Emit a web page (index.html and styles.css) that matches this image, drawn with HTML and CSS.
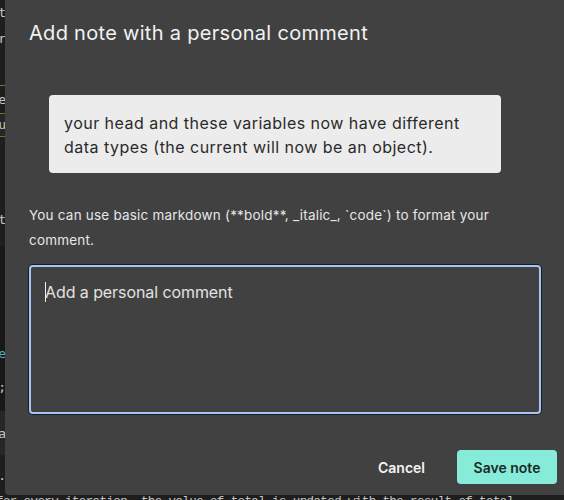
FILE: index.html
```html
<!DOCTYPE html>
<html lang="en">
<head>
<meta charset="utf-8">
<title>Add note</title>
<link rel="stylesheet" href="styles.css">
</head>
<body>
<div class="page">
  <div class="gutter">
    <div class="seg h26"><span>nt</span></div>
    <div class="seg h26"><span>r</span></div>
    <div class="seg h33"></div>
    <div class="seg h28 gold"><span>e</span></div>
    <div class="seg h24 gold lite"><span>u</span></div>
    <div class="seg h56 gold"><span></span></div>
    <div class="seg h54"><span>t</span></div>
    <div class="seg h100 dark"></div>
    <div class="seg h16 dark"><span class="teal">e</span></div>
    <div class="seg h50 dark"><span>;</span></div>
    <div class="seg h44 lite"><span>a</span></div>
    <div class="seg h40"><span>.</span></div>
  </div>
  <div class="bottomline">for every iteration, the value of total is updated with the result of total</div>
</div>

<div class="modal" role="dialog" aria-labelledby="t">
  <h2 class="title" id="t">Add note with a personal comment</h2>
  <div class="quote">your head and these variables now have different data types (the current will now be an object).</div>
  <p class="hint">You can use basic markdown (**bold**, _italic_, `code`) to format your comment.</p>
  <div class="field"><span class="caret"></span><span class="placeholder">Add a personal comment</span></div>
  <div class="actions">
    <button class="btn cancel">Cancel</button>
    <button class="btn save">Save note</button>
  </div>
</div>
</body>
</html>
```

FILE: styles.css
```css
* { box-sizing: border-box; }
html, body {
  margin: 0;
  width: 564px;
  height: 500px;
  overflow: hidden;
  background: #1e1e1e;
}
body { position: relative; font-family: Inter, "Noto Sans", sans-serif; }

.page {
  display: flex;
  flex-direction: column;
  height: 500px;
}
.gutter {
  width: 8px;
  display: flex;
  flex-direction: column;
  overflow: hidden;
}
.seg {
  display: flex;
  justify-content: flex-end;
  align-items: center;
  font-family: "DejaVu Sans Mono", monospace;
  font-size: 13px;
  color: #c8c8c8;
  white-space: nowrap;
  background: #1e1e1e;
}
.seg span { margin-right: 2px; }
.seg.gold { border-top: 1px solid #7d6b2c; }
.seg.lite { background: #262626; }
.seg.dark { background: #181818; }
.teal { color: #4fb0c6; }
.h16 { height: 16px; } .h24 { height: 24px; } .h26 { height: 26px; } .h28 { height: 28px; }
.h33 { height: 33px; } .h40 { height: 40px; } .h44 { height: 44px; } .h50 { height: 50px; }
.h54 { height: 54px; } .h56 { height: 56px; } .h100 { height: 100px; }

.bottomline {
  margin-top: auto;
  margin-left: -4px;
  height: 5px;
  overflow: visible;
  font-family: "Liberation Mono", monospace;
  font-size: 12.5px;
  line-height: 14px;
  color: #c4c4c4;
  white-space: nowrap;
  letter-spacing: -0.6px;
}

.modal {
  position: absolute;
  left: 5px;
  top: 0;
  width: 576px;
  height: 495px;
  background: #414141;
  border-radius: 0 0 4px 4px;
  padding: 19px 24px 11px 24px;
  display: flex;
  flex-direction: column;
}
.title {
  margin: 0;
  font-size: 20px;
  line-height: 28px;
  font-weight: 400;
  color: #f2f2f2;
  letter-spacing: 0.3px;
}
.quote {
  margin: 48px 0 0 20px;
  width: 452px;
  background: #ececec;
  border-radius: 4px;
  padding: 16px 15px 14px 15px;
  font-size: 16px;
  line-height: 24px;
  color: #2a2a2a;
  letter-spacing: 0.47px;
}
.hint {
  margin: 30px 0 0 0;
  font-size: 13.5px;
  line-height: 25px;
  color: #e6e6e6;
  letter-spacing: 0.2px;
}
.field {
  margin-top: 12px;
  width: 512px;
  height: 149px;
  border: 2px solid #a6c4f5;
  border-radius: 4px;
  box-shadow: 0 0 0 1px #1c1c1c;
  padding: 13px 14px;
  display: flex;
  align-items: flex-start;
  font-size: 16px;
  line-height: 24px;
}
.caret {
  width: 1px;
  height: 20px;
  margin-top: 2px;
  background: #f0f0f0;
  margin-right: -1px;
}
.placeholder { color: #e2e2e2; letter-spacing: -0.08px; }
.actions {
  margin-top: auto;
  display: flex;
  justify-content: flex-end;
  gap: 16px;
}
.btn {
  font-family: Inter, "Noto Sans", sans-serif;
  font-size: 14px;
  font-weight: 600;
  height: 34px;
  border: none;
  border-radius: 4px;
  padding: 0 16px;
  cursor: pointer;
}
.cancel { background: transparent; color: #f4f4f4; }
.save { background: #86ecd9; color: #1c2a27; width: 100px; padding: 0; }
```
